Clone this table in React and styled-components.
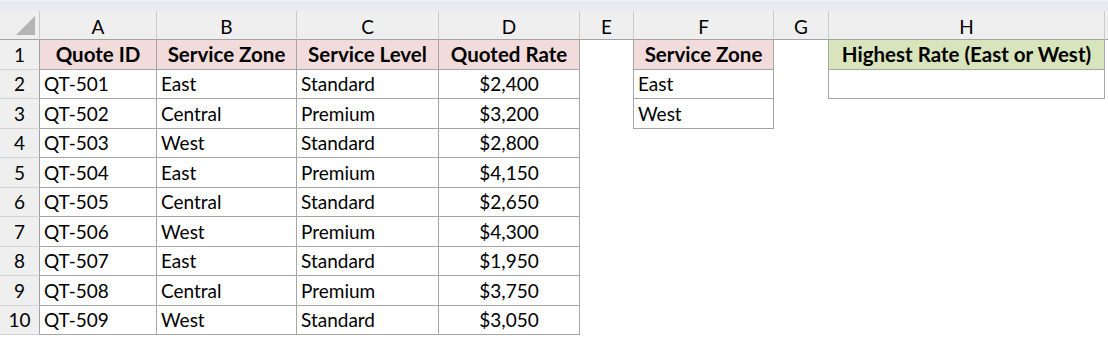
import React from 'react';
import styled, { createGlobalStyle } from 'styled-components';

const GlobalStyle = createGlobalStyle`
  html, body {
    margin: 0;
    padding: 0;
    background: #ffffff;
  }
`;

const Sheet = styled.div`
  width: 1108px;
  height: 337px;
  overflow: hidden;
  background: #ffffff;
  font-family: Lato, "Open Sans", sans-serif;
  color: #000000;
`;

const TopStrip = styled.div`
  height: 11px;
  background: #e7eaee;
  border-top: 1px solid #f1f3f5;
  box-sizing: border-box;
`;

const Grid = styled.div`
  display: grid;
  grid-template-columns: 40px 117px 140px 142px 141px 54px 140px 55px 276px 1fr;
  grid-template-rows: 29px repeat(10, 29.5px);
`;

const Corner = styled.div`
  background: #efefef;
  border-right: 1px solid #c9c9c9;
  border-bottom: 1px solid #a3a3a3;
  position: relative;
  &::after {
    content: '';
    position: absolute;
    right: 4px;
    bottom: 4px;
    width: 0;
    height: 0;
    border-left: 19px solid transparent;
    border-bottom: 19px solid #b4b4b4;
  }
`;

const ColHead = styled.div`
  background: #efefef;
  border-right: 1px solid #c9c9c9;
  border-bottom: 1px solid #a3a3a3;
  display: flex;
  align-items: center;
  justify-content: center;
  font-size: 19px;
  padding-top: 2px;
`;

const RowHead = styled.div`
  background: #efefef;
  border-right: 1px solid #a3a3a3;
  border-bottom: 1px solid #d2d2d2;
  display: flex;
  align-items: center;
  justify-content: center;
  font-size: 19px;
`;

const Cell = styled.div`
  box-sizing: border-box;
  display: flex;
  align-items: center;
  justify-content: ${(p) => (p.$align === 'center' ? 'center' : 'flex-start')};
  padding: 0 4px;
  font-size: ${(p) => (p.$bold ? '20.5px' : '19px')};
  font-weight: ${(p) => (p.$bold ? 700 : 400)};
  white-space: nowrap;
  background: ${(p) => p.$fill || '#ffffff'};
  border-right: ${(p) => (p.$border || p.$edgeRight ? '1px solid #a6a6a6' : 'none')};
  border-bottom: ${(p) => (p.$border ? '1px solid #a6a6a6' : 'none')};
`;

const PINK = '#f2dcdb';
const GREEN = '#d8e4bc';

const quotes = [
  ['QT-501', 'East', 'Standard', '$2,400'],
  ['QT-502', 'Central', 'Premium', '$3,200'],
  ['QT-503', 'West', 'Standard', '$2,800'],
  ['QT-504', 'East', 'Premium', '$4,150'],
  ['QT-505', 'Central', 'Standard', '$2,650'],
  ['QT-506', 'West', 'Premium', '$4,300'],
  ['QT-507', 'East', 'Standard', '$1,950'],
  ['QT-508', 'Central', 'Premium', '$3,750'],
  ['QT-509', 'West', 'Standard', '$3,050'],
];

const zones = ['East', 'West'];
const letters = ['A', 'B', 'C', 'D', 'E', 'F', 'G', 'H', ''];

const App = () => {
  const rows = [];

  // row 1: headers
  rows.push(
    <React.Fragment key="r1">
      <RowHead>1</RowHead>
      <Cell $border $bold $align="center" $fill={PINK}>Quote ID</Cell>
      <Cell $border $bold $align="center" $fill={PINK}>Service Zone</Cell>
      <Cell $border $bold $align="center" $fill={PINK}>Service Level</Cell>
      <Cell $border $bold $align="center" $fill={PINK}>Quoted Rate</Cell>
      <Cell $edgeRight />
      <Cell $border $bold $align="center" $fill={PINK}>Service Zone</Cell>
      <Cell $edgeRight />
      <Cell $border $bold $align="center" $fill={GREEN}>Highest Rate (East or West)</Cell>
      <Cell />
    </React.Fragment>
  );

  quotes.forEach((q, i) => {
    const zone = zones[i];
    rows.push(
      <React.Fragment key={q[0]}>
        <RowHead>{i + 2}</RowHead>
        <Cell $border>{q[0]}</Cell>
        <Cell $border>{q[1]}</Cell>
        <Cell $border>{q[2]}</Cell>
        <Cell $border $align="center">{q[3]}</Cell>
        <Cell $edgeRight={!!zone} />
        {zone ? <Cell $border>{zone}</Cell> : <Cell />}
        <Cell $edgeRight={i === 0} />
        {i === 0 ? <Cell $border /> : <Cell />}
        <Cell />
      </React.Fragment>
    );
  });

  return (
    <Sheet>
      <GlobalStyle />
      <TopStrip />
      <Grid>
        <Corner />
        {letters.map((l, i) => (
          <ColHead key={i}>{l}</ColHead>
        ))}
        {rows}
      </Grid>
    </Sheet>
  );
};

export default App;
